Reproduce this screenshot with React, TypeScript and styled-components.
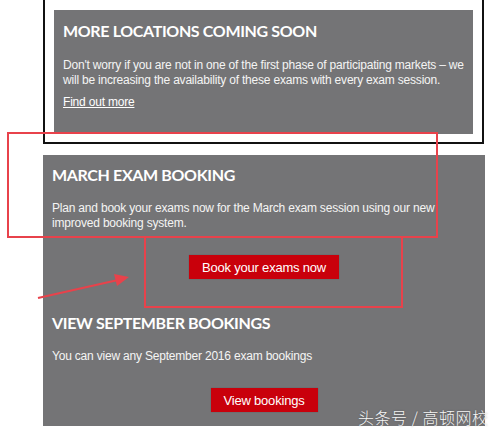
import React from "react";
import styled, { createGlobalStyle } from "styled-components";

const GlobalStyle = createGlobalStyle`
  html, body {
    margin: 0;
    padding: 0;
    background: #ffffff;
  }
  body {
    width: 500px;
    height: 432px;
    overflow: hidden;
    font-family: "Liberation Sans", Arial, sans-serif;
  }
`;

const Page = styled.div`
  position: relative;
  width: 500px;
  height: 432px;
`;

const Frame = styled.div`
  box-sizing: border-box;
  margin-left: 43px;
  width: 441px;
  height: 144px;
  padding: 10px 9px 0 9px;
  border: 2px solid #111;
  border-top: none;
`;

const Panel = styled.section`
  box-sizing: border-box;
  height: 124px;
  background: #747476;
  color: #f4f4f4;
  padding: 11px 9px 0 9px;
`;

const Title = styled.h2<{ $top?: number }>`
  margin: ${(p) => p.$top ?? 0}px 0 0 0;
  font-family: Lato, "Open Sans", sans-serif;
  font-weight: 700;
  font-size: 16px;
  line-height: 20px;
  letter-spacing: -0.35px;
  color: #ffffff;
`;

const Text = styled.p<{ $top: number }>`
  margin: ${(p) => p.$top}px 0 0 0;
  font-size: 12px;
  line-height: 15px;
  letter-spacing: -0.2px;
  white-space: nowrap;
`;

const More = styled.a`
  display: block;
  width: fit-content;
  margin-top: 7px;
  font-size: 12px;
  line-height: 15px;
  letter-spacing: -0.2px;
  color: #ffffff;
  text-decoration: underline;
`;

const Booking = styled.div`
  margin: 11px 0 0 43px;
  width: 442px;
  height: 271px;
  box-sizing: border-box;
  background: #747476;
  color: #f4f4f4;
  padding: 10px 9px 0 9px;
`;

const ButtonRow = styled.div<{ $top: number }>`
  display: flex;
  justify-content: center;
  margin-top: ${(p) => p.$top}px;
`;

const RedButton = styled.button<{ $w: number }>`
  width: ${(p) => p.$w}px;
  height: 24px;
  border: none;
  background: #c9000b;
  color: #ffffff;
  font-family: "Liberation Sans", Arial, sans-serif;
  font-size: 13px;
  letter-spacing: -0.2px;
  padding: 0;
  box-shadow: 0 0 1px rgba(0, 0, 0, 0.3);
`;

const Mark = styled.div<{ $x: number; $y: number; $w: number; $h: number }>`
  position: absolute;
  left: ${(p) => p.$x}px;
  top: ${(p) => p.$y}px;
  width: ${(p) => p.$w}px;
  height: ${(p) => p.$h}px;
  box-sizing: border-box;
  border: 2px solid #e8424b;
  pointer-events: none;
`;

const Arrow = styled.svg`
  position: absolute;
  left: 0;
  top: 0;
  pointer-events: none;
`;

const Watermark = styled.div`
  position: absolute;
  left: 358px;
  top: 407px;
  font-family: "Noto Sans CJK SC", sans-serif;
  font-weight: 300;
  font-size: 16px;
  line-height: 20px;
  color: #f6f6f6;
  text-shadow: 0 0 2px rgba(0, 0, 0, 0.3);
  letter-spacing: 0.5px;
`;

export default function App() {
  return (
    <Page>
      <GlobalStyle />
      <Frame>
        <Panel>
          <Title>MORE LOCATIONS COMING SOON</Title>
          <Text $top={17}>
            Don't worry if you are not in one of the first phase of participating markets – we
            <br />
            will be increasing the availability of these exams with every exam session.
          </Text>
          <More href="#">Find out more</More>
        </Panel>
      </Frame>

      <Booking>
        <Title>MARCH EXAM BOOKING</Title>
        <Text $top={16}>
          Plan and book your exams now for the March exam session using our new
          <br />
          improved booking system.
        </Text>
        <ButtonRow $top={24}>
          <RedButton $w={150}>Book your exams now</RedButton>
        </ButtonRow>
        <Title $top={34}>VIEW SEPTEMBER BOOKINGS</Title>
        <Text $top={16}>You can view any September 2016 exam bookings</Text>
        <ButtonRow $top={24}>
          <RedButton $w={107}>View bookings</RedButton>
        </ButtonRow>
      </Booking>

      <Mark $x={7} $y={132} $w={431} $h={106} />
      <Mark $x={144} $y={236} $w={259} $h={72} />
      <Arrow width="500" height="432">
        <line x1="38" y1="298" x2="118" y2="280" stroke="#e8424b" strokeWidth="2.2" />
        <polygon points="129,277 114,274 117,286" fill="#e8424b" />
      </Arrow>
      <Watermark>头条号 / 高顿网校</Watermark>
    </Page>
  );
}
